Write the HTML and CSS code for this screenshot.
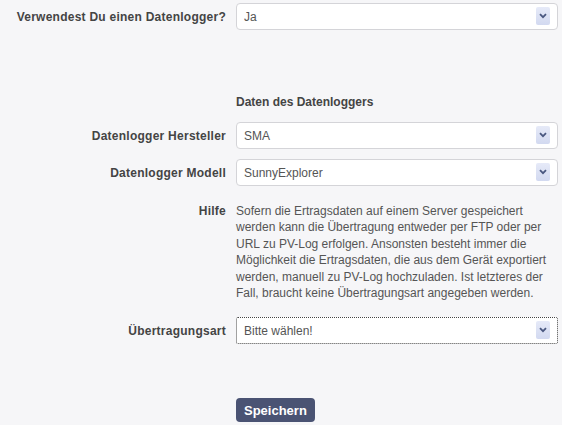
FILE: index.html
```html
<!DOCTYPE html>
<html lang="de">
<head>
  <meta charset="UTF-8">
  <meta name="viewport" content="width=device-width, initial-scale=1.0">
  <title>Datenlogger</title>
  <link rel="stylesheet" href="styles.css">
</head>
<body>
  <form class="form">
    <div class="row">
      <label class="label" for="uses">Verwendest Du einen Datenlogger?</label>
      <div class="selectWrap">
        <select id="uses" class="select">
          <option>Ja</option>
          <option>Nein</option>
        </select>
        <span class="arrow"><svg width="8" height="6" viewBox="0 0 8 6"><path d="M1 1.2 L4 4.2 L7 1.2" fill="none" stroke="#4a5880" stroke-width="1.8"/></svg></span>
      </div>
    </div>

    <div class="row heading">
      <span></span>
      <div class="sectionTitle">Daten des Datenloggers</div>
    </div>

    <div class="row">
      <label class="label" for="maker">Datenlogger Hersteller</label>
      <div class="selectWrap">
        <select id="maker" class="select">
          <option>SMA</option>
        </select>
        <span class="arrow"><svg width="8" height="6" viewBox="0 0 8 6"><path d="M1 1.2 L4 4.2 L7 1.2" fill="none" stroke="#4a5880" stroke-width="1.8"/></svg></span>
      </div>
    </div>

    <div class="row tight">
      <label class="label" for="model">Datenlogger Modell</label>
      <div class="selectWrap">
        <select id="model" class="select">
          <option>SunnyExplorer</option>
        </select>
        <span class="arrow"><svg width="8" height="6" viewBox="0 0 8 6"><path d="M1 1.2 L4 4.2 L7 1.2" fill="none" stroke="#4a5880" stroke-width="1.8"/></svg></span>
      </div>
    </div>

    <div class="row help">
      <span class="label">Hilfe</span>
      <p class="helpText">Sofern die Ertragsdaten auf einem Server gespeichert werden kann die Übertragung entweder per FTP oder per URL zu PV-Log erfolgen. Ansonsten besteht immer die Möglichkeit die Ertragsdaten, die aus dem Gerät exportiert werden, manuell zu PV-Log hochzuladen. Ist letzteres der Fall, braucht keine Übertragungsart angegeben werden.</p>
    </div>

    <div class="row transfer">
      <label class="label" for="transfer">Übertragungsart</label>
      <div class="selectWrap focused">
        <select id="transfer" class="select">
          <option>Bitte wählen!</option>
          <option>FTP</option>
          <option>URL</option>
        </select>
        <span class="arrow"><svg width="8" height="6" viewBox="0 0 8 6"><path d="M1 1.2 L4 4.2 L7 1.2" fill="none" stroke="#4a5880" stroke-width="1.8"/></svg></span>
      </div>
    </div>

    <div class="row actions">
      <span></span>
      <div><button type="button" class="saveButton">Speichern</button></div>
    </div>
  </form>
</body>
</html>
```

FILE: styles.css
```css
* {
  font-family: "Liberation Sans", Arial, Helvetica, sans-serif;
  box-sizing: border-box;
}
body {
  margin: 0;
  padding-top: 3px;
  background: #f6f6f8;
  font-size: 12px;
  color: #555;
}
.form {
  margin: 0;
}
.row {
  display: grid;
  grid-template-columns: 226px 322px;
  column-gap: 10px;
  align-items: center;
}
.label {
  text-align: right;
  font-weight: bold;
  color: #444;
  font-size: 12px;
  letter-spacing: 0.25px;
}
.heading {
  margin-top: 64px;
  line-height: 16px;
}
.sectionTitle {
  font-weight: bold;
  color: #444;
}
.heading + .row {
  margin-top: 12px;
}
.tight {
  margin-top: 10px;
}
.selectWrap {
  position: relative;
  height: 27px;
}
.select {
  -webkit-appearance: none;
  appearance: none;
  width: 100%;
  height: 27px;
  border: 1px solid #d4d4d8;
  border-radius: 4px;
  background: #fff;
  padding: 0 28px 0 7px;
  font-size: 12px;
  color: #555;
  outline: none;
}
.focused .select {
  border: 1px dotted #444;
  border-radius: 2px;
}
.arrow {
  position: absolute;
  right: 8px;
  top: 4px;
  width: 14px;
  height: 18px;
  border-radius: 2px;
  background: linear-gradient(#e6eaf8, #d2d9f0);
  display: flex;
  align-items: center;
  justify-content: center;
  pointer-events: none;
}
.help {
  margin-top: 17px;
  align-items: start;
  line-height: 16.4px;
}
.helpText {
  margin: 0;
  color: #555;
}
.transfer {
  margin-top: 16px;
}
.actions {
  margin-top: 54px;
}
.saveButton {
  height: 24px;
  padding: 0 8px;
  border: none;
  border-radius: 4px;
  background: #4a5373;
  color: #fff;
  font-weight: bold;
  font-size: 13px;
}
```
